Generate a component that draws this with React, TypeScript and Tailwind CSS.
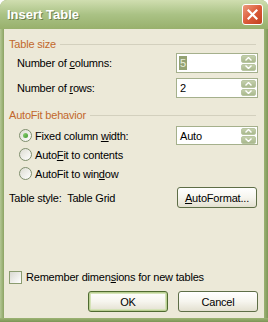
import React from "react";

const font = { fontFamily: '"Liberation Sans", Arial, sans-serif' };

function Spin() {
  return (
    <div className="flex flex-col gap-[1px] w-[15px] h-[16px] mr-[1px]">
      {["up", "down"].map((d) => (
        <div
          key={d}
          className="flex-1 flex items-center justify-center rounded-[2px] bg-gradient-to-b from-[#c3cfab] to-[#a9b88d] border border-[#b9c6a2]"
        >
          <svg width="7" height="4" viewBox="0 0 7 4">
            <path
              d={d === "up" ? "M0.5 3.5 L3.5 0.5 L6.5 3.5" : "M0.5 0.5 L3.5 3.5 L6.5 0.5"}
              fill="none"
              stroke="#ffffff"
              strokeWidth="1.4"
            />
          </svg>
        </div>
      ))}
    </div>
  );
}

function SpinBox({ value, selected, h = "h-[20px]" }: { value: string; selected?: boolean; h?: string }) {
  return (
    <div className={`flex items-center w-[82px] ${h} bg-white border border-[#a5b08c] pl-[2px]`}>
      <div className="flex-1 flex">
        <span
          className={
            selected
              ? "bg-[#94a273] text-[#e9eddc] text-[11px] leading-[14px] px-[1px]"
              : "text-black text-[11px] leading-[14px] px-[1px]"
          }
        >
          {value}
        </span>
      </div>
      <Spin />
    </div>
  );
}

function Radio({ checked }: { checked?: boolean }) {
  return (
    <div className="w-[13px] h-[13px] rounded-full border border-[#7f8f6e] bg-gradient-to-br from-[#dcdcd2] to-white flex items-center justify-center">
      {checked && <div className="w-[5px] h-[5px] rounded-full bg-gradient-to-br from-[#8fd27a] to-[#3f9a2c]" />}
    </div>
  );
}

function GroupHeader({ label, mt }: { label: string; mt: string }) {
  return (
    <div className={`flex items-center h-[14px] ${mt} pl-[5px] pr-[8px] gap-[4px]`}>
      <span className="text-[11px] leading-[14px] text-[#c2682c]">{label}</span>
      <div className="flex-1 h-[1px] bg-[#d3d0be]" />
    </div>
  );
}

function XpButton({ children, def }: { children: React.ReactNode; def?: boolean }) {
  return (
    <div
      className={`w-[80px] h-[21px] rounded-[3px] border ${
        def ? "border-[#4f6b30]" : "border-[#5e6e47]"
      } bg-gradient-to-b from-white via-[#f6f5ee] to-[#e3e0d0] flex items-center justify-center ${
        def ? "shadow-[inset_0_0_0_1px_#b9cf92,inset_0_0_0_2px_#d5e3b8]" : ""
      } text-[11px] leading-[14px] text-black`}
    >
      {children}
    </div>
  );
}

export default function App() {
  return (
    <div className="w-[268px] h-[322px] flex flex-col bg-[#8ea565] rounded-t-[7px] overflow-hidden select-none" style={font}>
      {/* title bar */}
      <div className="h-[29px] flex items-center pl-[7px] pr-[5px] bg-gradient-to-b from-[#d0deb0] via-[#aac285] to-[#98b06c]">
        <span className="flex-1 text-[13px] font-bold text-white [text-shadow:1px_1px_0_#6b7f4a]">Insert Table</span>
        <div className="w-[21px] h-[21px] rounded-[3px] border border-white bg-gradient-to-br from-[#eb9a7c] via-[#dc5b3a] to-[#c1411f] flex items-center justify-center">
          <svg width="11" height="11" viewBox="0 0 11 11">
            <path d="M1.5 1.5 L9.5 9.5 M9.5 1.5 L1.5 9.5" stroke="#ffffff" strokeWidth="2.2" strokeLinecap="square" />
          </svg>
        </div>
      </div>

      <div className="flex-1 flex">
        <div className="w-[4px] bg-gradient-to-r from-[#b4c795] to-[#8ca463]" />
        <div className="flex-1 flex flex-col bg-[#ece9d8] text-[11px] leading-[14px] tracking-[-0.2px] text-black">
          <GroupHeader label="Table size" mt="mt-[8px]" />

          <div className="flex items-center h-[20px] mt-[2px] pl-[13px] pr-[6px]">
            <span className="flex-1">
              Number of <u>c</u>olumns:
            </span>
            <SpinBox value="5" selected />
          </div>
          <div className="flex items-center h-[20px] mt-[5px] pl-[13px] pr-[6px]">
            <span className="flex-1">
              Number of <u>r</u>ows:
            </span>
            <SpinBox value="2" />
          </div>

          <GroupHeader label="AutoFit behavior" mt="mt-[10px]" />

          <div className="flex items-center h-[19px] mt-[4px] pl-[15px] pr-[6px] gap-[3px]">
            <Radio checked />
            <span className="flex-1">
              Fixed column <u>w</u>idth:
            </span>
            <SpinBox value="Auto" h="h-[19px]" />
          </div>
          <div className="flex items-center h-[19px] pl-[15px] gap-[3px]">
            <Radio />
            <span>
              Auto<u>F</u>it to contents
            </span>
          </div>
          <div className="flex items-center h-[19px] pl-[15px] gap-[3px]">
            <Radio />
            <span>
              AutoFit to win<u>d</u>ow
            </span>
          </div>

          <div className="flex items-center h-[21px] mt-[4px] pl-[5px] pr-[7px]">
            <span className="flex-1">Table style:&nbsp; Table Grid</span>
            <XpButton>
              <span>
                <u>A</u>utoFormat...
              </span>
            </XpButton>
          </div>

          <div className="flex-1" />

          <div className="flex items-center h-[14px] pl-[5px] gap-[4px]">
            <div className="w-[13px] h-[13px] border border-[#8b9c70] bg-gradient-to-br from-[#d9d9d1] to-white" />
            <span>
              Remember dimen<u>s</u>ions for new tables
            </span>
          </div>

          <div className="flex justify-end items-center h-[21px] mt-[7px] mb-[6px] pr-[6px] gap-[10px]">
            <XpButton def>OK</XpButton>
            <XpButton>Cancel</XpButton>
          </div>
        </div>
        <div className="w-[4px] bg-gradient-to-r from-[#9cb274] to-[#7f9758]" />
      </div>
      <div className="h-[4px] bg-gradient-to-b from-[#9db474] to-[#7c9455]" />
    </div>
  );
}
